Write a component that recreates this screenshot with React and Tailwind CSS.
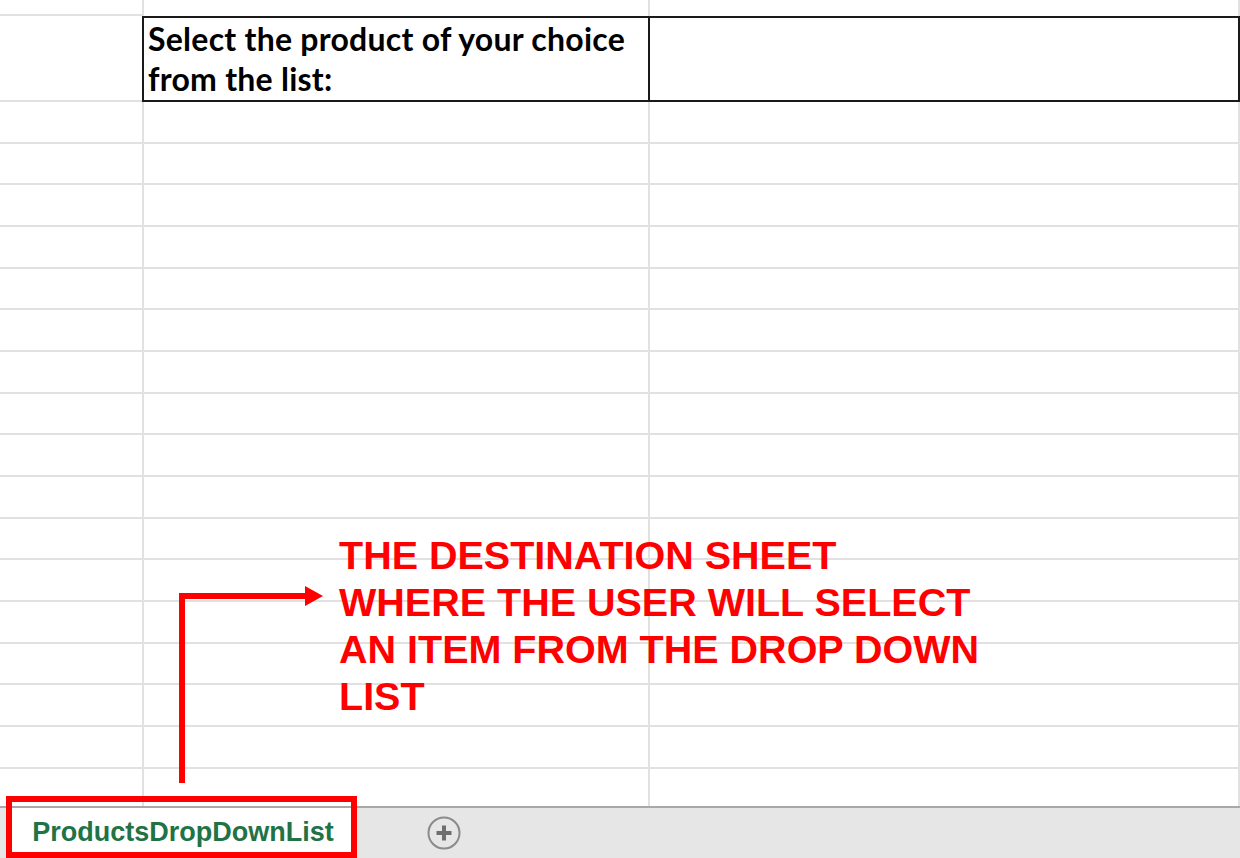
const ROW_COUNT = 17;

const GridRow = () => (
  <div className="flex h-[41.67px] shrink-0">
    <div className="w-[144px] border-b-2 border-r-2 border-[#e1e1e1]" />
    <div className="w-[506px] border-b-2 border-r-2 border-[#e1e1e1]" />
    <div className="w-[590px] border-b-2 border-r-2 border-[#e1e1e1]" />
  </div>
);

const PlusCircle = () => (
  <svg width="36" height="36" viewBox="0 0 36 36">
    <circle cx="18" cy="18" r="15.5" fill="none" stroke="#8a8a8a" strokeWidth="2" />
    <path d="M18 10.5v15M10.5 18h15" stroke="#6e6e6e" strokeWidth="4" strokeLinecap="butt" />
  </svg>
);

const App = () => {
  return (
    <div className="relative flex h-[858px] w-[1240px] flex-col overflow-hidden bg-white">
      {/* Sheet grid */}
      <div className="flex-1 overflow-hidden">
        <div className="flex h-[16px]">
          <div className="w-[144px] border-b-2 border-r-2 border-[#e1e1e1]" />
          <div className="w-[506px] border-r-2 border-[#e1e1e1]" />
          <div className="w-[590px] border-r-2 border-[#e1e1e1]" />
        </div>

        {/* Merged header row */}
        <div className="flex h-[86px]">
          <div className="w-[142px] border-b-2 border-[#e1e1e1]" />
          <div className="flex w-[508px] flex-col justify-center border-2 border-[#1a1a1a] pl-[4px] font-['Lato',sans-serif] text-[32px] leading-[40px] font-bold tracking-[0.25px] text-black">
            <span>Select the product of your choice</span>
            <span>from the list:</span>
          </div>
          <div className="w-[590px] border-y-2 border-r-2 border-[#1a1a1a]" />
        </div>

        {Array.from({ length: ROW_COUNT }).map((_, i) => (
          <GridRow key={i} />
        ))}
      </div>

      {/* Sheet tabs */}
      <div className="flex h-[52px] shrink-0 items-stretch border-t-2 border-[#a8a8a8] bg-[#e6e6e6]">
        <div className="ml-[10px] flex w-[342px] items-center justify-center bg-white pb-[2px] pl-[4px] font-['Liberation_Sans',Arial,sans-serif] text-[27px] font-bold text-[#217346]">
          ProductsDropDownList
        </div>
        <div className="ml-[74px] flex items-center">
          <PlusCircle />
        </div>
      </div>

      {/* Annotations */}
      <div className="absolute left-[339px] top-[532px] font-['Liberation_Sans',Arial,sans-serif] text-[39.5px] leading-[47px] font-bold text-[#ff0000]">
        <p>THE DESTINATION SHEET</p>
        <p>WHERE THE USER WILL SELECT</p>
        <p>AN ITEM FROM THE DROP DOWN</p>
        <p>LIST</p>
      </div>

      <svg className="absolute left-0 top-0" width="1240" height="858" viewBox="0 0 1240 858">
        <path d="M182 783V596H308" fill="none" stroke="#ff0000" strokeWidth="6" />
        <path d="M305 586L323 596L305 606Z" fill="#ff0000" />
      </svg>

      <div className="absolute left-[6px] top-[796px] h-[62px] w-[351px] border-[6px] border-[#ff0000]" />
    </div>
  );
};

export default App;
